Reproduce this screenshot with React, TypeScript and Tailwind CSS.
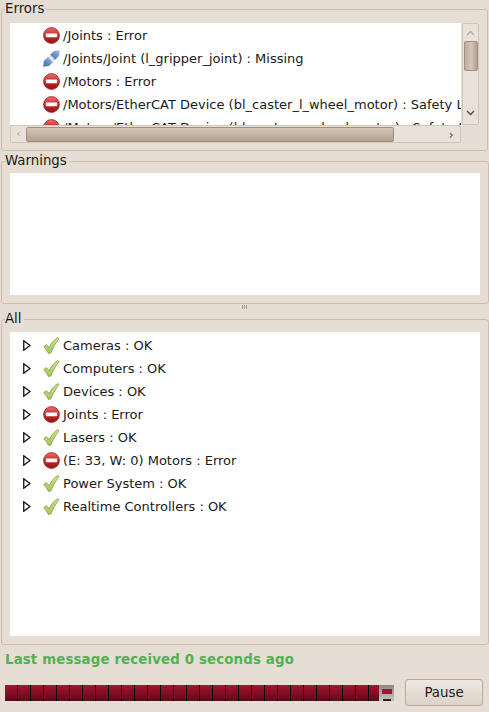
import React from 'react';

const ErrorIcon = () => (
  <svg width="17" height="17" viewBox="0 0 17 17" className="shrink-0">
    <defs>
      <linearGradient id="errFill" x1="0" y1="0" x2="0" y2="1">
        <stop offset="0" stopColor="#e8726f" />
        <stop offset="0.45" stopColor="#cf2a2a" />
        <stop offset="1" stopColor="#8f1414" />
      </linearGradient>
    </defs>
    <circle cx="8.5" cy="8.5" r="7.9" fill="url(#errFill)" stroke="#9a1f1f" strokeWidth="0.8" />
    <rect x="2.8" y="6.6" width="11.4" height="3.6" rx="0.6" fill="#ffffff" />
  </svg>
);

const OkIcon = () => (
  <svg width="17" height="17" viewBox="0 0 17 17" className="shrink-0">
    <defs>
      <linearGradient id="okFill" x1="0" y1="0" x2="0" y2="1">
        <stop offset="0" stopColor="#d3e58f" />
        <stop offset="1" stopColor="#a3c655" />
      </linearGradient>
    </defs>
    <path
      d="M0.8 9.6 L3.4 7.6 L6.2 10.6 C8 6.6 10.8 3.2 14.6 0.6 L16 1.6 C12.6 6 10 10.6 7.8 16 L5.4 16.4 C4.2 13.8 2.6 11.6 0.8 9.6 Z"
      fill="url(#okFill)"
      stroke="#7f9c45"
      strokeWidth="0.8"
      strokeLinejoin="round"
    />
  </svg>
);

const PlugIcon = () => (
  <svg width="17" height="17" viewBox="0 0 17 17" className="shrink-0">
    <defs>
      <linearGradient id="plugFill" x1="0" y1="1" x2="1" y2="0">
        <stop offset="0" stopColor="#3566ad" />
        <stop offset="1" stopColor="#9fc0ea" />
      </linearGradient>
    </defs>
    <path d="M0.2 16.8 L0.9 11 L5 7 L10 12 L6 16 Z" fill="url(#plugFill)" />
    <path d="M7 5 L11 0.9 L16.8 0.2 L16 6 L12 10 Z" fill="url(#plugFill)" />
    <path d="M5.6 8.2 L8.2 5.6 L11.4 8.8 L8.8 11.4 Z" fill="#e4e9f0" stroke="#8ea3bd" strokeWidth="0.5" />
  </svg>
);

const Expander = () => (
  <svg width="8" height="11" viewBox="0 0 8 11" className="shrink-0">
    <path d="M0.75 0.75 L7 5.5 L0.75 10.25 Z" fill="#ffffff" stroke="#111111" strokeWidth="1.3" strokeLinejoin="miter" />
  </svg>
);

const Frame = ({ title, className, children }: { title: string; className: string; children: React.ReactNode }) => (
  <fieldset className={`border border-[#c9bdb0] rounded-[3px] mx-px ${className}`}>
    <legend className="-ml-[5px] pr-0.5 text-[13.33px] leading-[16px] h-[16px] text-[#1a1a1a]">{title}</legend>
    {children}
  </fieldset>
);

const errorRows = [
  { icon: <ErrorIcon />, text: '/Joints : Error' },
  { icon: <PlugIcon />, text: '/Joints/Joint (l_gripper_joint) : Missing' },
  { icon: <ErrorIcon />, text: '/Motors : Error' },
  { icon: <ErrorIcon />, text: '/Motors/EtherCAT Device (bl_caster_l_wheel_motor) : Safety Lockout' },
  { icon: <ErrorIcon />, text: '/Motors/EtherCAT Device (bl_caster_r_wheel_motor) : Safety Lockout' },
];

const allRows = [
  { ok: true, text: 'Cameras : OK' },
  { ok: true, text: 'Computers : OK' },
  { ok: true, text: 'Devices : OK' },
  { ok: false, text: 'Joints : Error' },
  { ok: true, text: 'Lasers : OK' },
  { ok: false, text: '(E: 33, W: 0) Motors : Error' },
  { ok: true, text: 'Power System : OK' },
  { ok: true, text: 'Realtime Controllers : OK' },
];

export default function App() {
  return (
    <div
      className="w-[489px] h-[712px] overflow-hidden bg-[#e6ddd4] text-[13px] text-[#1a1a1a]"
      style={{ fontFamily: '"DejaVu Sans", sans-serif' }}
    >
      <Frame title="Errors" className="h-[150px] mt-px px-2 pt-[6px]">
        <div className="flex w-[469px] h-[120px]">
          <div className="w-[451px]">
            <div className="h-[102px] bg-white overflow-hidden pt-px">
              {errorRows.map((row, i) => (
                <div key={i} className="flex items-center h-[23px] pl-[33px] gap-[3px] whitespace-nowrap">
                  {row.icon}
                  <span>{row.text}</span>
                </div>
              ))}
            </div>
            <div className="flex items-center h-[18px] border border-[#cfc5b9] rounded-[2px] bg-[#e9e2db]">
              <span className="w-[15px] text-center text-[10px] leading-none text-[#a89c90]">‹</span>
              <div className="w-[368px] h-[15px] rounded-[2px] border border-[#a1907f] bg-gradient-to-b from-[#d3c6b9] to-[#b1a090]" />
              <span className="ml-auto w-[18px] text-center text-[13px] leading-none text-[#4d4d4d]">›</span>
            </div>
          </div>
          <div className="flex flex-col items-center w-[17px] h-[102px] ml-px border border-[#cfc5b9] rounded-[2px] bg-[#e9e2db]">
            <svg width="9" height="6" viewBox="0 0 9 6" className="mt-1.5">
              <path d="M1 5 L4.5 1.5 L8 5" fill="none" stroke="#b5a99c" strokeWidth="1.4" />
            </svg>
            <div className="w-[14px] h-[30px] mt-[5px] rounded-[2px] border border-[#a1907f] bg-gradient-to-r from-[#bdae9f] via-[#d3c6b9] to-[#b1a090]" />
            <svg width="9" height="6" viewBox="0 0 9 6" className="mt-auto mb-2">
              <path d="M1 1 L4.5 4.5 L8 1" fill="none" stroke="#4d4d4d" strokeWidth="1.4" />
            </svg>
          </div>
        </div>
      </Frame>

      <Frame title="Warnings" className="h-[151px] mt-[2px] px-2 pt-[4px]">
        <div className="w-[470px] h-[122px] bg-white" />
      </Frame>

      <div className="flex justify-center items-center gap-px h-[6px] mb-px">
        <span className="w-px h-[4px] bg-[#a89c90]" />
        <span className="w-px h-[4px] bg-[#a89c90]" />
        <span className="w-px h-[4px] bg-[#a89c90]" />
      </div>

      <Frame title="All" className="h-[334px] px-2 pt-[5px]">
        <div className="w-[470px] h-[304px] bg-white pt-0.5">
          {allRows.map((row, i) => (
            <div key={i} className="flex items-center h-[23px] pl-[13px] whitespace-nowrap">
              <Expander />
              <span className="ml-[12px] mr-[3px] flex">{row.ok ? <OkIcon /> : <ErrorIcon />}</span>
              <span>{row.text}</span>
            </div>
          ))}
        </div>
      </Frame>

      <div className="px-[5px] mt-[7px] h-[16px] text-[13.33px] leading-[16px] tracking-[0.15px] font-bold text-[#52b152] whitespace-nowrap">
        Last message received 0 seconds ago
      </div>

      <div className="flex items-center pl-[5px] mt-[11px]">
        <div className="relative flex w-[389px] h-[16px] overflow-hidden bg-gradient-to-b from-[#a8142f] to-[#5e0a18]">
          {Array.from({ length: 29 }).map((_, i) => (
            <div key={i} className="w-[13px] h-full shrink-0 border-r border-black" />
          ))}
          <div className="absolute right-0 top-0 flex flex-col items-center w-[15px] h-[16px] bg-gradient-to-b from-[#8a8a8a] to-[#c5c5c5]">
            <div className="w-[10px] h-[5px] mt-1 bg-[#a8142f]" />
            <div className="w-[8px] h-[2px] mt-auto bg-[#222222]" />
          </div>
        </div>
        <button className="ml-[11px] w-[78px] h-[27px] rounded-[3px] border border-[#b8aa9c] bg-gradient-to-b from-[#eee8e2] to-[#ddd3c9] text-[13.33px] text-[#1a1a1a]">
          Pause
        </button>
      </div>
    </div>
  );
}
